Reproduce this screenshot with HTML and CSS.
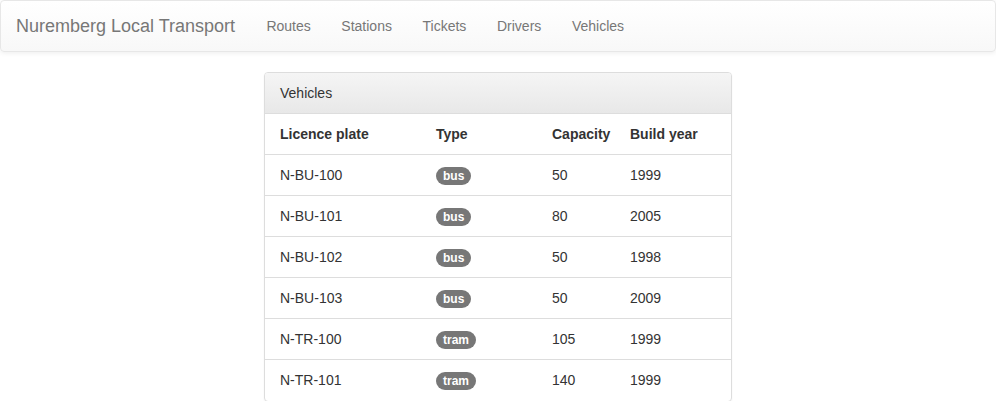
FILE: index.html
```html
<!DOCTYPE html>
<html>
<head>
<meta charset="utf-8">
<title>Nuremberg Local Transport</title>
<link rel="stylesheet" href="styles.css">
</head>
<body>
<nav class="navbar">
  <a class="brand" href="#">Nuremberg Local Transport</a>
  <ul class="nav">
    <li><a href="#">Routes</a></li>
    <li><a href="#">Stations</a></li>
    <li><a href="#">Tickets</a></li>
    <li><a href="#">Drivers</a></li>
    <li><a href="#">Vehicles</a></li>
  </ul>
</nav>
<main class="content">
  <section class="panel">
    <div class="panel-heading">Vehicles</div>
    <table class="table">
      <colgroup>
        <col class="c1"><col class="c2"><col class="c3"><col class="c4">
      </colgroup>
      <thead>
        <tr><th>Licence plate</th><th>Type</th><th>Capacity</th><th>Build year</th></tr>
      </thead>
      <tbody>
        <tr><td>N-BU-100</td><td><span class="badge">bus</span></td><td>50</td><td>1999</td></tr>
        <tr><td>N-BU-101</td><td><span class="badge">bus</span></td><td>80</td><td>2005</td></tr>
        <tr><td>N-BU-102</td><td><span class="badge">bus</span></td><td>50</td><td>1998</td></tr>
        <tr><td>N-BU-103</td><td><span class="badge">bus</span></td><td>50</td><td>2009</td></tr>
        <tr><td>N-TR-100</td><td><span class="badge">tram</span></td><td>105</td><td>1999</td></tr>
        <tr><td>N-TR-101</td><td><span class="badge">tram</span></td><td>140</td><td>1999</td></tr>
      </tbody>
    </table>
  </section>
</main>
</body>
</html>
```
FILE: styles.css
```css
* { box-sizing: border-box; }
html, body { margin: 0; padding: 0; }
body {
  font-family: "Liberation Sans", Arial, Helvetica, sans-serif;
  font-size: 14px;
  line-height: 20px;
  color: #333;
  background: #fff;
}
a { text-decoration: none; }

.navbar {
  display: flex;
  align-items: center;
  height: 52px;
  border: 1px solid #e7e7e7;
  border-radius: 4px;
  background: linear-gradient(to bottom, #fff 0%, #f8f8f8 100%);
  box-shadow: inset 0 1px 0 rgba(255,255,255,.15), 0 1px 5px rgba(0,0,0,.075);
  margin-bottom: 20px;
}
.brand {
  font-size: 18px;
  line-height: 20px;
  padding: 15px 16px 15px 15px;
  color: #777;
  text-shadow: 0 1px 0 rgba(255,255,255,.25);
}
.nav {
  display: flex;
  list-style: none;
  margin: 0;
  padding: 0;
}
.nav a {
  display: block;
  padding: 15px 15.3px;
  color: #777;
  text-shadow: 0 1px 0 rgba(255,255,255,.25);
}

.content {
  display: flex;
  justify-content: center;
  padding: 0 264px;
}
.panel {
  width: 468px;
  border: 1px solid #ddd;
  border-radius: 4px;
  box-shadow: 0 1px 2px rgba(0,0,0,.05);
  overflow: hidden;
}
.panel-heading {
  padding: 10px 15px;
  border-bottom: 1px solid #ddd;
  background: linear-gradient(to bottom, #f5f5f5 0%, #e8e8e8 100%);
  color: #333;
}
.table {
  width: 100%;
  border-collapse: collapse;
  table-layout: fixed;
}
.c1 { width: 163px; }
.c2 { width: 116px; }
.c3 { width: 78px; }
.table th, .table td {
  text-align: left;
  padding: 10px 8px;
  line-height: 20px;
  vertical-align: top;
  border-top: 1px solid #ddd;
}
.table td { height: 41px; }
.table thead th { border-top: 0; font-weight: bold; }
.table th:first-child, .table td:first-child { padding-left: 15px; }
.table th:last-child, .table td:last-child { padding-right: 15px; }

.badge {
  display: inline-block;
  min-width: 10px;
  padding: 3px 7px;
  font-size: 12px;
  font-weight: bold;
  line-height: 12px;
  color: #fff;
  text-align: center;
  white-space: nowrap;
  vertical-align: 0;
  margin-top: -2px;
  background-color: #777;
  border-radius: 10px;
}
```
